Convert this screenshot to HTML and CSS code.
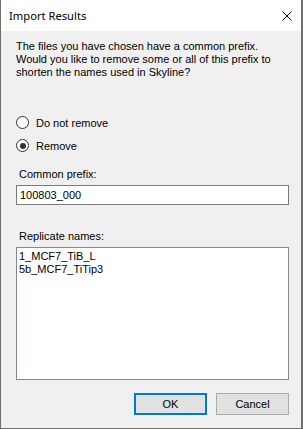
FILE: index.html
```html
<!DOCTYPE html>
<html>
<head>
<meta charset="utf-8">
<link rel="stylesheet" href="styles.css">
</head>
<body>
<div class="window">
  <div class="titlebar">
    <span class="title">Import Results</span>
    <svg class="close" width="10" height="10" viewBox="0 0 10 10"><path d="M0.5 0.5 L9.5 9.5 M9.5 0.5 L0.5 9.5" stroke="#000" stroke-width="1" fill="none"/></svg>
  </div>
  <div class="content">
    <p class="intro">The files you have chosen have a common prefix.<br>Would you like to remove some or all of this prefix to<br>shorten the names used in Skyline?</p>
    <div class="radios">
      <label class="radio"><span class="dot"></span>Do not remove</label>
      <label class="radio checked"><span class="dot"></span>Remove</label>
    </div>
    <div class="label prefix-label">Common prefix:</div>
    <div class="textbox">100803_000</div>
    <div class="label names-label">Replicate names:</div>
    <div class="listbox">
      <div>1_MCF7_TiB_L</div>
      <div>5b_MCF7_TiTip3</div>
    </div>
    <div class="buttons">
      <div class="btn ok">OK</div>
      <div class="btn">Cancel</div>
    </div>
  </div>
</div>
</body>
</html>
```
FILE: styles.css
```css
html, body { margin: 0; padding: 0; }
body { width: 303px; height: 429px; overflow: hidden; font-family: "Liberation Sans", Arial, sans-serif; font-size: 11px; color: #000; }
.window { box-sizing: border-box; width: 303px; height: 429px; display: flex; flex-direction: column; border-left: 1px solid #707070; border-right: 2px solid #707070; border-bottom: 1px solid #707070; background: #f0f0f0; }
.titlebar { height: 31px; background: #fff; display: flex; align-items: center; justify-content: space-between; padding: 0 9px 0 8px; flex: none; }
.title { font-family: "Noto Sans", "Open Sans", sans-serif; font-size: 11.2px; color: #000; }
.close { display: block; margin-top: 0; }
.content { flex: 1; display: flex; flex-direction: column; padding: 0 12px 0 15px; }
.intro { margin: 9px 0 0 0; line-height: 13px; }
.radios { display: flex; flex-direction: column; gap: 10px; margin-top: 37px; }
.radio { display: flex; align-items: center; height: 13px; }
.dot { box-sizing: border-box; width: 13px; height: 13px; border: 1px solid #333; border-radius: 50%; background: #fff; margin-right: 7px; display: flex; align-items: center; justify-content: center; }
.checked .dot::after { content: ""; width: 6px; height: 6px; border-radius: 50%; background: #333; }
.label { line-height: 13px; padding-left: 3px; }
.prefix-label { margin-top: 16px; }
.textbox { box-sizing: border-box; height: 20px; margin-top: 4px; border: 1px solid #7a7a7a; background: #fff; padding: 0 3px; line-height: 18px; }
.names-label { margin-top: 25px; }
.listbox { box-sizing: border-box; height: 133px; margin-top: 4px; border: 1px solid #828790; background: #fff; padding: 2px 2px; line-height: 13px; }
.buttons { display: flex; justify-content: flex-end; gap: 9px; margin-top: 13px; }
.btn { box-sizing: border-box; width: 73px; height: 22px; border: 1px solid #adadad; background: #e1e1e1; display: flex; align-items: center; justify-content: center; }
.btn.ok { border: 2px solid #0078d7; }
```
